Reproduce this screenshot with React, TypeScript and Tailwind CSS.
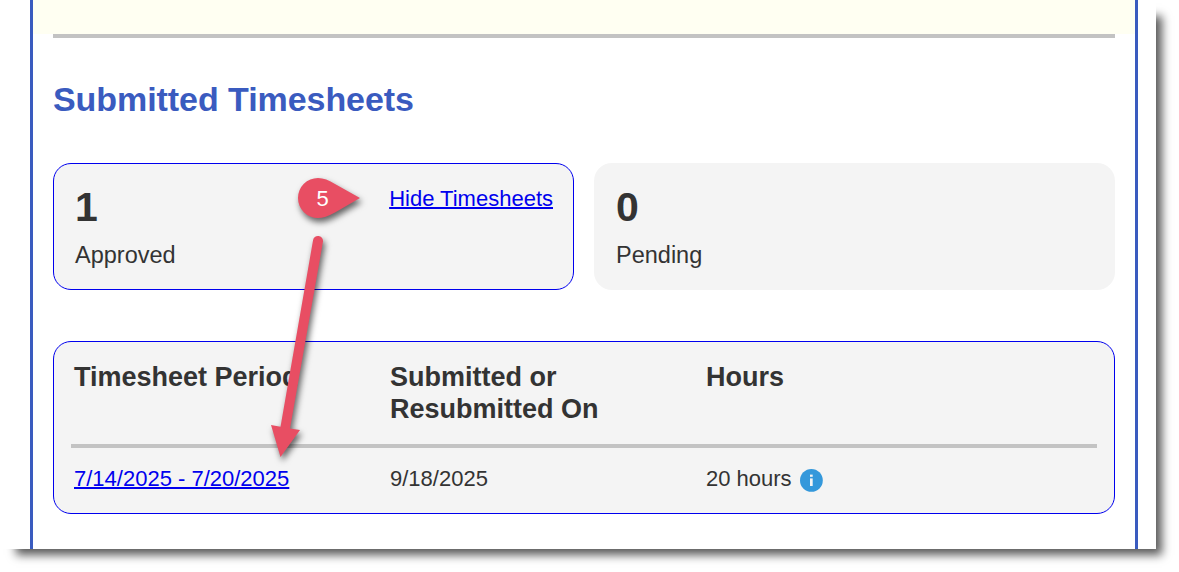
import React from 'react'

const summary = [
    { count: 1, label: 'Approved', action: 'Hide Timesheets' },
    { count: 0, label: 'Pending' },
];

const InfoIcon = () => {
    return (
        <svg className="mt-[2px] ml-[7px] h-[24px] w-[24px]" viewBox="0 0 24 24">
            <circle cx="12.4" cy="12.4" r="11.4" fill="#3498db" />
            <rect x="11" y="6.6" width="2.7" height="2.2" fill="#f4f4f4" />
            <rect x="11" y="10.4" width="2.7" height="7.6" fill="#f4f4f4" />
        </svg>
    );
};

const Callout = () => {
    return (
        <svg
            className="pointer-events-none absolute top-0 left-0 h-[549px] w-[600px] overflow-visible"
            viewBox="0 0 600 549"
        >
            <g className="drop-shadow-[2px_4px_3px_rgba(0,0,0,0.6)]" fill="#e84e63">
                <path d="M360 198 L335 184 Q326 178 318 178 A20 20 0 1 0 318 218 Q325 218 335 212.5 Z" />
                <path d="M313 240.5 A5 5 0 0 1 323 241.5 L290 428.5 L300 430 L280.5 457 L271 425 L280.5 426.8 Z" />
            </g>
            <text
                x="322.5"
                y="206"
                fill="#fff"
                textAnchor="middle"
                className="font-['Liberation_Sans',sans-serif] text-[22px]"
            >
                5
            </text>
        </svg>
    );
};

const App = () => {
    return (
        <div className="h-[572px] w-[1179px] overflow-hidden bg-white font-['Liberation_Sans',Arial,sans-serif] text-[#333]">
            <div className="relative h-[549px] w-[1156px] bg-white px-[30px] shadow-[11px_11px_9px_-5px_rgba(0,0,0,0.65)]">
                <div className="h-full w-[1108px] border-x-[3px] border-[#3a5bbf]">
                    <div className="h-[34px] bg-[#fffff2]" />
                    <div className="mr-[20px] ml-[20px]">
                        <hr className="h-[4px] border-0 bg-[#c3c3c3]" />
                        <h2 className="mt-[41px] text-[34px] leading-[40px] font-bold tracking-[-0.06px] text-[#3a5bbf]">
                            Submitted Timesheets
                        </h2>
                        <div className="mt-[44px] grid grid-cols-2 gap-[20px]">
                            {summary.map((item) => (
                                <div
                                    key={item.label}
                                    className={`flex h-[127px] items-start justify-between rounded-[18px] border bg-[#f4f4f4] pt-[19px] pr-[20px] pl-[21px] ${item.action ? 'border-[#0000ee]' : 'border-transparent'}`}
                                >
                                    <div>
                                        <div className="text-[41px] leading-[48px] font-bold">{item.count}</div>
                                        <div className="mt-[10px] text-[23.5px] leading-[28px]">{item.label}</div>
                                    </div>
                                    {item.action && (
                                        <a
                                            href="#"
                                            className="mt-[3px] text-[22px] leading-[26px] text-[#0000ee] underline decoration-2"
                                        >
                                            {item.action}
                                        </a>
                                    )}
                                </div>
                            ))}
                        </div>
                        <div className="mt-[51px] h-[173px] rounded-[18px] border border-[#0000ee] bg-[#f4f4f4] px-[17px]">
                            <div className="grid h-[106px] grid-cols-[316px_316px_1fr] border-b-[4px] border-[#c3c3c3] pt-[19px] pl-[3px] text-[27px] leading-[32px] font-bold">
                                <div>Timesheet Period</div>
                                <div className="pr-[60px]">Submitted or Resubmitted On</div>
                                <div>Hours</div>
                            </div>
                            <div className="grid grid-cols-[316px_316px_1fr] pt-[18px] pl-[3px] text-[22px] leading-[26px]">
                                <div>
                                    <a href="#" className="text-[#0000ee] underline decoration-2">7/14/2025 - 7/20/2025</a>
                                </div>
                                <div>9/18/2025</div>
                                <div className="flex">
                                    20 hours
                                    <InfoIcon />
                                </div>
                            </div>
                        </div>
                    </div>
                </div>
                <Callout />
            </div>
        </div>
    );
};

export default App;
